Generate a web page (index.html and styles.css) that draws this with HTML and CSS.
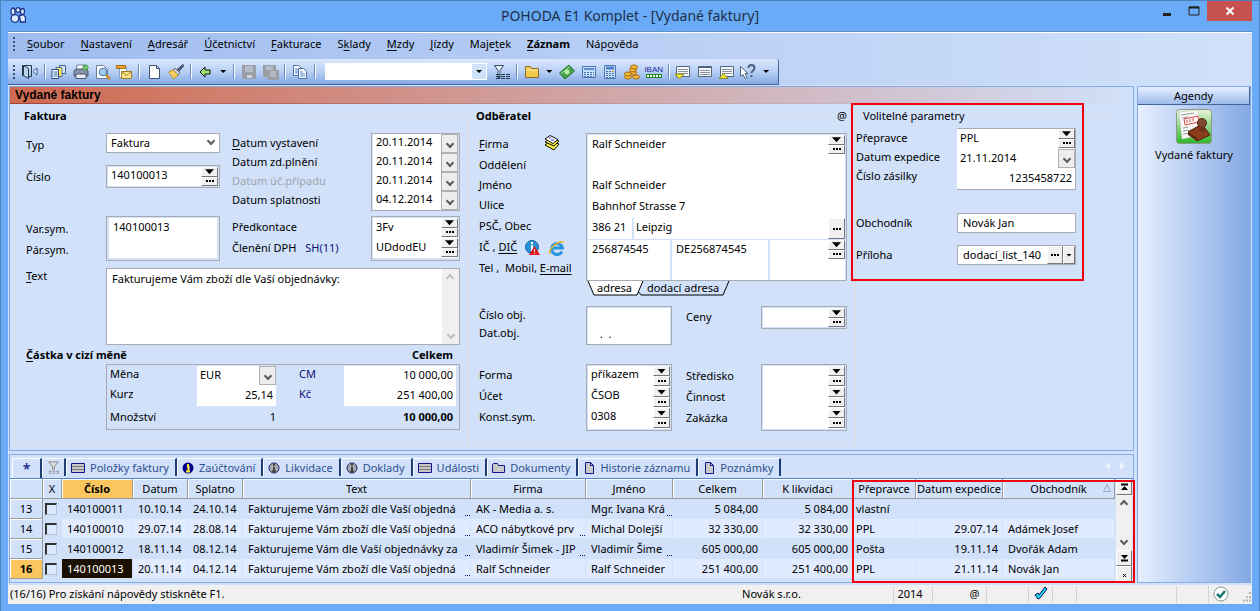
FILE: index.html
```html
<!DOCTYPE html>
<html lang="cs">
<head>
  <meta charset="UTF-8">
  <title>POHODA E1 Komplet - [Vydané faktury]</title>
  <meta name="viewport" content="width=device-width, initial-scale=1.0" />
  <link rel="stylesheet" href="styles.css">
</head>
<body>

  <header class="titlebar">
    <svg class="logo" viewBox="0 0 16 16"><g fill="#dcecff" stroke="#24348c" stroke-width="1.3"><ellipse cx="3" cy="4.500" rx="2" ry="3.500"/><ellipse cx="8" cy="3" rx="2.200" ry="2.300"/><ellipse cx="12.500" cy="4.500" rx="2" ry="3"/><circle cx="5" cy="11.500" r="3.800"/><path d="M9.500 8.500l4-1 2 3v4.500h-5z"/></g></svg>
    <h1>POHODA E1 Komplet - [Vydané faktury]</h1>
    <div class="winbuttons">
      <button aria-label="Minimalizovat"><svg width="10" height="10"><path d="M1 8.500h8" stroke="#222" stroke-width="3"/></svg></button>
      <button aria-label="Maximalizovat"><svg width="12" height="10"><path d="M1 1h10v8H1z" fill="none" stroke="#222"/><path d="M1 1.500h10" stroke="#222" stroke-width="2"/></svg></button>
      <button class="close" aria-label="Zavřít"><svg width="10" height="10"><path d="M1.500 1.500l7 7m0-7l-7 7" stroke="#fff" stroke-width="2"/></svg></button>
    </div>
  </header>

  <div class="client">
    <nav class="menu">
      <span class="grip"></span>
      <a href="#"><u>S</u>oubor</a>
      <a href="#"><u>N</u>astavení</a>
      <a href="#"><u>A</u>dresář</a>
      <a href="#"><u>Ú</u>četnictví</a>
      <a href="#"><u>F</u>akturace</a>
      <a href="#">S<u>k</u>lady</a>
      <a href="#"><u>M</u>zdy</a>
      <a href="#"><u>J</u>ízdy</a>
      <a href="#">Maje<u>t</u>ek</a>
      <a href="#"><b><u>Z</u>áznam</b></a>
      <a href="#">Náp<u>o</u>věda</a>
    </nav>

    <div class="toolbar">
      <span class="grip"></span>
      <button aria-label="Konec"><svg viewBox="0 0 16 16"><path d="M.500 12.500V1.500h9v11H6.500" fill="none" stroke="#223c4c"/><path d="M1.500 1.500l5 3v10l-5-3z" fill="#b8d4e8" stroke="#223c4c"/><path d="M15 4v7l-4-3.500z" fill="#e8f2ff" stroke="#3d5f94"/></svg></button>
      <i class="sep"></i>
      <button aria-label="Agendy"><svg viewBox="0 0 16 16"><path d="M8.500 1.500h6v8h-6z" fill="#dbe8fa" stroke="#3c5c94"/><path d="M5 3.500h6v9H5z" fill="#fde858" stroke="#53719d"/><path d="M1 5.500h6.500v9H1z" fill="#fff" stroke="#2d4f88"/><path d="M2.500 8h4m-4 2h4m-4 2h4" stroke="#2b66bd"/></svg></button>
      <button aria-label="Tisk"><svg viewBox="0 0 16 16"><path d="M4 1h8l-1 6H3z" fill="#fff" stroke="#7286a0"/><path d="M1 7l2-2h10l2 2v5H1z" fill="#8793a8" stroke="#48546a"/><path d="M3 10h10v4.500H3z" fill="#e8edf5" stroke="#4b5872"/><circle cx="12.500" cy="3.500" r="3" fill="#49a64b"/><path d="M11 3.500l1 1 2-2" stroke="#fff" fill="none"/></svg></button>
      <button aria-label="Náhled"><svg viewBox="0 0 16 16"><path d="M1.500 1.500h7l4 4v9h-11z" fill="#fff" stroke="#667f9e"/><path d="M11 11l4 4" stroke="#c98a25" stroke-width="2.500"/><circle cx="8" cy="8" r="3.800" fill="#9dcbee" stroke="#51779f"/></svg></button>
      <button aria-label="Odeslat e-mailem"><svg viewBox="0 0 16 16"><path d="M3.500 3.500h7v10h-7z" fill="#fff" stroke="#8ca0bb"/><path d="M.500 1.500h9v3h-9z" fill="#f0a32e" stroke="#a96b1b"/><path d="M5.500 7.500h10v7h-10z" fill="#fbe48a" stroke="#9d7c24"/><path d="M5.500 7.500l5 4 5-4" fill="none" stroke="#9d7c24"/></svg></button>
      <i class="sep"></i>
      <button aria-label="Nový"><svg viewBox="0 0 16 16"><path d="M3.500 1.500h7l3 3v10h-10z" fill="#fff" stroke="#3d5576"/><path d="M10.500 1.500v3h3" fill="none" stroke="#3d5576"/></svg></button>
      <button aria-label="Vyčistit"><svg viewBox="0 0 16 16"><path d="M15 .500l.500 1.500-5 6-2-2z" fill="#54658a" stroke="#39476b"/><path d="M7 4l5 5-2 2-5-5z" fill="#c8ccd8" stroke="#777"/><path d="M5 6l5 5-4 4-5.500-7z" fill="#f4cf60" stroke="#b98e31"/></svg></button>
      <i class="sep"></i>
      <button aria-label="Zpět"><svg viewBox="0 0 16 16"><path d="M3 8l5-5v3h5v4H8v3z" fill="#9be86e" stroke="#111"/></svg></button>
      <button class="caret" aria-label="Historie"></button>
      <i class="sep"></i>
      <button disabled aria-label="Uložit"><svg viewBox="0 0 16 16"><path d="M1 1h14v14H1z" fill="#9b9ea4"/><path d="M4 2h8v6H4z" fill="#b4bcc8"/><path d="M6 11h5v3H6z" fill="#c8d2e0"/></svg></button>
      <button disabled aria-label="Uložit kopii"><svg viewBox="0 0 16 16"><path d="M0 1h13v5h3v10H5v-3H0z" fill="#9b9ea4"/><path d="M3 2h7v4H3z" fill="#b4bcc8"/><path d="M7 8h6m-6 2h6m-6 2h6" stroke="#c8d2e0"/></svg></button>
      <i class="sep"></i>
      <button aria-label="Kopírovat"><svg viewBox="0 0 16 16"><path d="M1.500 1.500h5l3 3v7h-8z" fill="#fff" stroke="#4a70aa"/><path d="M6.500 4.500h5l3 3v7h-8z" fill="#fff" stroke="#4a70aa"/><path d="M3 5h3m-3 2h3m-3 2h3m2-1h3m-3 2h5m-5 2h5" stroke="#4a82cc"/></svg></button>
      <i class="sep"></i>
      <span class="search"><input type="text" aria-label="Hledat"><button class="caret" aria-label="Seznam"></button></span>
      <button aria-label="Filtr"><svg viewBox="0 0 16 16"><path d="M.500 1.500h9l-3.500 5v7H4v-7z" fill="#e8f2ff" stroke="#354e65"/><path d="M2 10.500h14m-14 2h14m-14 2h14" stroke="#24394b" stroke-dasharray="4 1"/></svg></button>
      <i class="sep"></i>
      <button aria-label="Složka"><svg viewBox="0 0 16 16"><path d="M1.500 2.500h5l1 2h7v9h-13z" fill="#f2cb4e" stroke="#8a7027"/><path d="M2 6h12" stroke="#fff0aa"/></svg></button>
      <button class="caret" aria-label="Složky"></button>
      <button aria-label="Platba"><svg viewBox="0 0 16 16"><path d="M.500 9L10 1l5.500 6L6 15z" fill="#43a34d" stroke="#23722e"/><path d="M2 9.500L11 2.500" stroke="#b0e89a"/><circle cx="8" cy="8" r="2.500" fill="#b9e9a9"/></svg></button>
      <button aria-label="Kalkulačka"><svg viewBox="0 0 16 16"><path d="M1.500 2.500h13v11h-13z" fill="#c6ddfa" stroke="#4c78b3"/><path d="M3 5h10" stroke="#608fc9" stroke-width="2"/><path d="M3 8.500h10m-10 2h10m-10 2h10" stroke="#4773ac" stroke-dasharray="2 1"/></svg></button>
      <button aria-label="Kalkulátor"><svg viewBox="0 0 16 16"><path d="M2.500 1.500h11v13h-11z" fill="#c6ddfa" stroke="#4c78b3"/><path d="M4 4h8" stroke="#4d82c9" stroke-width="3"/><path d="M4 7.500h8m-8 2h8m-8 2h8m-8 2h8" stroke="#4773ac" stroke-dasharray="2 1"/><path d="M10 7.500h2" stroke="#f08a20"/></svg></button>
      <button aria-label="Mince"><svg viewBox="0 0 16 16"><g fill="#f4b838" stroke="#a56b10"><ellipse cx="9" cy="9" rx="3.500" ry="2"/><ellipse cx="9" cy="6" rx="3.500" ry="2"/><ellipse cx="10" cy="3" rx="3.500" ry="2"/><ellipse cx="4" cy="13" rx="3.500" ry="2"/><ellipse cx="4" cy="10" rx="3.500" ry="2"/><ellipse cx="12" cy="13" rx="3.500" ry="2"/></g></svg></button>
      <button class="iban" aria-label="IBAN"><b>IBAN</b><span></span></button>
      <i class="sep"></i>
      <button aria-label="Okno dole"><svg viewBox="0 0 16 16"><path d="M1.500 2.500h13v10h-13z" fill="#f4f7fb" stroke="#53657a"/><path d="M3 5.500h10m-10 2h10m-10 2h10" stroke="#8a949f"/><path d="M0 10h9l-4.500 5z" fill="#f3ea34" stroke="#8a8522"/></svg></button>
      <button aria-label="Okno"><svg viewBox="0 0 16 16"><path d="M1.500 2.500h13v10h-13z" fill="#f4f7fb" stroke="#53657a"/><path d="M1 3.500h14" stroke="#53657a"/><path d="M3 6.500h10m-10 2h10m-10 2h10" stroke="#8a949f"/></svg></button>
      <button aria-label="Okno nahoře"><svg viewBox="0 0 16 16"><path d="M1.500 2.500h13v10h-13z" fill="#f4f7fb" stroke="#53657a"/><path d="M3 5.500h10m-10 2h10m-10 2h10" stroke="#8a949f"/><path d="M0 14.500h9l-4.500-5z" fill="#f3ea34" stroke="#8a8522"/></svg></button>
      <button aria-label="Nápověda"><svg viewBox="0 0 16 16"><path d="M.500 2.500v10l2.500-2 2 4 2-1-2-4h3z" fill="#fff" stroke="#53657a"/><path d="M8.500 4c0-4 6-4 6 0 0 3-3 2.500-3 5m0 2v2" fill="none" stroke="#46617e" stroke-width="2"/></svg></button>
      <button class="caret" aria-label="Možnosti"></button>
    </div>

    <div class="work">
      <main>
        <section class="agenda">
          <h2>Vydané faktury</h2>
          <form class="form">

            <fieldset class="invoice">
              <legend>Faktura</legend>
              <div class="labels type">
                <label for="typ">Typ</label>
                <label for="cislo">Číslo</label>
              </div>
              <div class="stack">
                <span class="select"><select id="typ"><option>Faktura</option></select></span>
                <div class="box"><div class="line"><input id="cislo" value="140100013"><span class="pick"><button type="button" class="drop" aria-label="Vybrat"></button><button type="button" class="more" aria-label="Další"></button></span></div></div>
              </div>
              <div class="labels dates">
                <label for="d1"><u>D</u>atum vystavení</label>
                <label for="d2">Datum zd.plnění</label>
                <label for="d3" class="off">Datum úč.případu</label>
                <label for="d4">Datum splatnosti</label>
              </div>
              <div class="box dates">
                <div class="line"><input id="d1" value="20.11.2014"><button type="button" class="chev" aria-label="Kalendář"></button></div>
                <div class="line"><input id="d2" value="20.11.2014"><button type="button" class="chev" aria-label="Kalendář"></button></div>
                <div class="line"><input id="d3" value="20.11.2014"><button type="button" class="chev" aria-label="Kalendář"></button></div>
                <div class="line"><input id="d4" value="04.12.2014"><button type="button" class="chev" aria-label="Kalendář"></button></div>
              </div>

              <div class="labels symbols">
                <label for="vs">Var.sym.</label>
                <label for="ps">Pár.sym.</label>
              </div>
              <div class="box wide"><div class="line"><input id="vs" value="140100013"></div><div class="line"><input id="ps"></div></div>
              <div class="labels account">
                <label for="pk">Předkontace</label>
                <label for="dph">Členění DPH <span class="code">SH(11)</span></label>
              </div>
              <div class="box">
                <div class="line"><input id="pk" value="3Fv"><span class="pick"><button type="button" class="drop" aria-label="Vybrat"></button><button type="button" class="more" aria-label="Další"></button></span></div>
                <div class="line"><input id="dph" value="UDdodEU"><span class="pick"><button type="button" class="drop" aria-label="Vybrat"></button><button type="button" class="more" aria-label="Další"></button></span></div>
              </div>

              <div class="labels"><label for="text"><u>T</u>ext</label></div>
              <div class="area">
                <textarea id="text">Fakturujeme Vám zboží dle Vaší objednávky:</textarea>
                <span class="bar"><i class="up"></i><i class="down"></i></span>
              </div>

              <div class="total"><b><u>Č</u>ástka v cizí měně</b><b>Celkem</b></div>

              <div class="sums">
                <label for="mena">Měna</label>
                <div class="line"><input id="mena" value="EUR"><button type="button" class="chev" aria-label="Měny"></button></div>
                <label for="cm" class="blue">CM</label>
                <input id="cm" class="num" value="10 000,00">
                <label for="kurz">Kurz</label>
                <input id="kurz" class="num" value="25,14">
                <label for="kc" class="blue">Kč</label>
                <input id="kc" class="num" value="251 400,00">
                <span class="out first">Množství</span>
                <span class="out">1</span>
                <b class="out last">10 000,00</b>
              </div>
            </fieldset>

            <fieldset class="buyer">
              <legend>Odběratel</legend>
              <span class="at">@</span>
              <div class="labels person">
                <label for="firma" class="spread"><span><u>F</u>irma</span><svg width="16" height="16" viewBox="0 0 16 16"><path d="M1 10l5-4 9 3-5 6z" fill="#f7ee3b" stroke="#111"/><path d="M1 7l5-4 9 3-5 5z" fill="#f7ee3b" stroke="#111"/><path d="M1 4l5-3.500 8 4-5 4z" fill="#fff" stroke="#111"/><path d="M5 3h2m0 2h3" stroke="#22c"/></svg></label>
                <label for="odd">Oddělení</label>
                <label for="jmeno">Jméno</label>
                <label for="ulice">Ulice</label>
                <label for="psc">PSČ, Obec</label>
                <div class="ids"><label for="ic">IČ ,</label> <a href="#">DIČ</a>
                  <svg width="16" height="16" viewBox="0 0 16 16"><circle cx="7" cy="7" r="6.500" fill="#2492d4" stroke="#1564a0"/><path d="M7 2v2m0 1v6" stroke="#fff" stroke-width="2"/><path d="M9.500 6l5.500 9H4z" fill="#e3141b"/><path d="M9.500 9v3m0 1v1" stroke="#fff"/></svg>
                  <svg width="16" height="16" viewBox="0 0 16 16"><path d="M13 11.500A5.500 5.500 0 1 1 13.500 8H4" fill="none" stroke="#2b96e0" stroke-width="3"/><path d="M1 14C-1 9 9 0 15 2" fill="none" stroke="#e8b635" stroke-width="1.500"/></svg>
                </div>
                <div><label for="tel">Tel ,</label>&nbsp; Mobil, <a href="#">E-mail</a></div>
              </div>
              <div class="person-box">
                <div class="cell"><input id="firma" value="Ralf Schneider"><span class="pick"><button type="button" class="drop" aria-label="Vybrat"></button><button type="button" class="more" aria-label="Další"></button></span></div>
                <div class="cell"><input id="odd"></div>
                <div class="cell"><input id="jmeno" value="Ralf Schneider"></div>
                <div class="cell"><input id="ulice" value="Bahnhof Strasse 7"></div>
                <div class="cell city"><input id="psc" value="386 21"><input aria-label="Obec" value="Leipzig"><button type="button" class="more tall" aria-label="Obce"></button></div>
                <div class="cell tax">
                  <div><input id="ic" value="256874545"><input id="tel"></div>
                  <div><input aria-label="DIČ" value="DE256874545"><input aria-label="Mobil"></div>
                  <div><input aria-label="E-mail"></div>
                  <span class="pick"><button type="button" class="drop" aria-label="Vybrat"></button><button type="button" class="more" aria-label="Další"></button></span>
                </div>
              </div>
              <div class="sheets"><svg width="145" height="16" viewBox="0 0 145 16"><path d="M1 0l6 14h43l6-14z" fill="#fff"/><path d="M1 0l6 14h43l6-14M51 10l3 4h82l6-14" fill="none" stroke="#000"/></svg><a href="#">adresa</a><a href="#">dodací adresa</a></div>

              <div class="labels order">
                <label for="obj">Číslo obj.</label>
                <label for="dobj">Dat.obj.</label>
              </div>
              <div class="box order"><div class="line"><input id="obj"></div><div class="line"><input id="dobj" value="  .  ."></div></div>
              <div class="labels prices"><label for="ceny">Ceny</label></div>
              <div class="box"><div class="line"><input id="ceny"><span class="pick"><button type="button" class="drop" aria-label="Vybrat"></button><button type="button" class="more" aria-label="Další"></button></span></div></div>

              <div class="labels pay">
                <label for="forma">Forma</label>
                <label for="ucet">Účet</label>
                <label for="ks">Konst.sym.</label>
              </div>
              <div class="box pay">
                <div class="line"><input id="forma" value="příkazem"><span class="pick"><button type="button" class="drop" aria-label="Vybrat"></button><button type="button" class="more" aria-label="Další"></button></span></div>
                <div class="line"><input id="ucet" value="ČSOB"><span class="pick"><button type="button" class="drop" aria-label="Vybrat"></button><button type="button" class="more" aria-label="Další"></button></span></div>
                <div class="line"><input id="ks" value="0308"><span class="pick"><button type="button" class="drop" aria-label="Vybrat"></button><button type="button" class="more" aria-label="Další"></button></span></div>
              </div>
              <div class="labels pay centre">
                <label for="str">Středisko</label>
                <label for="cin">Činnost</label>
                <label for="zak">Zakázka</label>
              </div>
              <div class="box pay">
                <div class="line"><input id="str"><span class="pick"><button type="button" class="drop" aria-label="Vybrat"></button><button type="button" class="more" aria-label="Další"></button></span></div>
                <div class="line"><input id="cin"><span class="pick"><button type="button" class="drop" aria-label="Vybrat"></button><button type="button" class="more" aria-label="Další"></button></span></div>
                <div class="line"><input id="zak"><span class="pick"><button type="button" class="drop" aria-label="Vybrat"></button><button type="button" class="more" aria-label="Další"></button></span></div>
              </div>
            </fieldset>

            <fieldset class="extra">
              <legend>Volitelné parametry</legend>
              <div class="labels ship">
                <label for="prep">Přepravce</label>
                <label for="exp">Datum expedice</label>
                <label for="zas">Číslo zásilky</label>
              </div>
              <div class="ship-box">
                <div class="line"><input id="prep" value="PPL"><span class="pick"><button type="button" class="drop" aria-label="Vybrat"></button><button type="button" class="more" aria-label="Další"></button></span></div>
                <div class="line"><input id="exp" value="21.11.2014"><button type="button" class="chev" aria-label="Kalendář"></button></div>
                <div class="line"><input id="zas" class="num" value="1235458722"></div>
              </div>
              <label for="obch">Obchodník</label>
              <div class="single"><input id="obch" value="Novák Jan"></div>
              <label for="pril">Příloha</label>
              <div class="single"><input id="pril" value="dodací_list_140"><button type="button" class="more flat" aria-label="Procházet"></button><button type="button" class="caret flat" aria-label="Přílohy"></button></div>
            </fieldset>
          </form>
        </section>

        <section class="list">
          <nav class="tabs">
            <a href="#" class="on">*</a>
            <a href="#" class="filter" aria-label="Filtr"><svg width="15" height="14" viewBox="0 0 16 14"><path d="M3 .500h10l-4 5v3H7v-3z" fill="#ddd" stroke="#888"/><path d="M3 10.500h11m-11 2h11" stroke="#888" stroke-dasharray="3 1"/></svg></a>
            <a href="#"><svg width="14" height="12"><path d="M.500 1.500h13v9H.500z" fill="#c8c8c8" stroke="#14148a"/><path d="M1 4.500h12m-12 3h12" stroke="#777"/></svg>Položky faktury</a>
            <a href="#"><svg width="12" height="12"><circle cx="6" cy="6" r="5.500" fill="#00008b"/><path d="M6 2v2m-1 1h1.500v4M4 9.500h4" stroke="#ffef3c" stroke-width="2" fill="none"/></svg>Zaúčtování</a>
            <a href="#"><svg width="12" height="12"><circle cx="6" cy="6" r="5" fill="#aaa" stroke="#20206c"/><path d="M6 2v2m0 1v4M4 9.500h4" stroke="#444" stroke-width="2"/></svg>Likvidace</a>
            <a href="#"><svg width="12" height="12"><circle cx="6" cy="6" r="5" fill="#aaa" stroke="#20206c"/><path d="M6 2v2m0 1v4M4 9.500h4" stroke="#444" stroke-width="2"/></svg>Doklady</a>
            <a href="#"><svg width="14" height="12"><path d="M.500 1.500h13v9H.500z" fill="#c8c8c8" stroke="#14148a"/><path d="M1 4.500h12m-12 3h12" stroke="#777"/></svg>Události</a>
            <a href="#"><svg width="13" height="12"><path d="M.500 10.500v-8l1-1h4l1 2h6v7z" fill="#c8c8c8" stroke="#14148a"/></svg>Dokumenty</a>
            <a href="#"><svg width="12" height="12"><path d="M2.500.500h5l3 3v8h-8z" fill="#c8c8c8" stroke="#14148a"/><path d="M7.500.500v3h3" fill="none" stroke="#14148a"/></svg>Historie záznamu</a>
            <a href="#"><svg width="12" height="12"><path d="M2.500.500h5l3 3v8h-8z" fill="#c8c8c8" stroke="#14148a"/><path d="M7.500.500v3h3" fill="none" stroke="#14148a"/></svg>Poznámky</a>
            <span class="arrows"><i></i><i></i></span>
          </nav>
          <div class="grid">
            <table>
              <colgroup>
                <col class="c-no"><col class="c-x"><col class="c-id"><col class="c-date"><col class="c-date"><col><col class="c-firm"><col class="c-name"><col class="c-sum"><col class="c-sum"><col class="c-ship"><col class="c-exp"><col class="c-sale">
              </colgroup>
              <thead>
                <tr><th></th><th>X</th><th class="sorted">Číslo</th><th>Datum</th><th>Splatno</th><th>Text</th><th>Firma</th><th>Jméno</th><th>Celkem</th><th>K likvidaci</th><th>Přepravce</th><th>Datum expedice</th><th class="asc">Obchodník<svg width="8" height="8"><path d="M.500 7.500h7L4 .500z" fill="none" stroke="#9aa8c4"/></svg></th></tr>
              </thead>
              <tbody>
                <tr><th>13</th><td class="tick"><input type="checkbox" aria-label="Označit 13"></td><td>140100011</td><td>10.10.14</td><td>24.10.14</td><td class="cut">Fakturujeme Vám zboží dle Vaší objedná</td><td>AK - Media a. s.</td><td class="cut">Mgr. Ivana Krá</td><td class="num">5 084,00</td><td class="num">5 084,00</td><td class="near">vlastní</td><td class="num"></td><td></td></tr>
                <tr><th>14</th><td class="tick"><input type="checkbox" aria-label="Označit 14"></td><td>140100010</td><td>29.07.14</td><td>28.08.14</td><td class="cut">Fakturujeme Vám zboží dle Vaší objedná</td><td class="cut">ACO nábytkové prv</td><td>Michal Dolejší</td><td class="num">32 330,00</td><td class="num">32 330,00</td><td class="near">PPL</td><td class="num">29.07.14</td><td>Adámek Josef</td></tr>
                <tr><th>15</th><td class="tick"><input type="checkbox" aria-label="Označit 15"></td><td>140100012</td><td>18.11.14</td><td>08.12.14</td><td class="cut">Fakturujeme Vám dle Vaší objednávky za</td><td class="cut">Vladimír Šimek - JIP</td><td class="cut">Vladimír Šime</td><td class="num">605 000,00</td><td class="num">605 000,00</td><td class="near">Pošta</td><td class="num">19.11.14</td><td>Dvořák Adam</td></tr>
                <tr class="current"><th>16</th><td class="tick"><input type="checkbox" aria-label="Označit 16"></td><td class="picked">140100013</td><td>20.11.14</td><td>04.12.14</td><td class="cut">Fakturujeme Vám zboží dle Vaší objedná</td><td>Ralf Schneider</td><td>Ralf Schneider</td><td class="num">251 400,00</td><td class="num">251 400,00</td><td class="near">PPL</td><td class="num">21.11.14</td><td>Novák Jan</td></tr>
              </tbody>
            </table>
            <div class="scroll">
              <button aria-label="Na začátek"><svg width="9" height="8"><path d="M1 1.500h7" stroke="#000" stroke-width="2"/><path d="M1 7h7L4.500 3z"/></svg></button>
              <span class="bar"><i class="up"></i><i class="down"></i></span>
              <button aria-label="Na konec"><svg width="9" height="8"><path d="M1 6.500h7" stroke="#000" stroke-width="2"/><path d="M1 1h7L4.500 5z"/></svg></button>
              <button aria-label="Zrušit"><svg width="5" height="5"><path d="M1 1l3 3m0-3l-3 3" stroke="#000"/></svg></button>
            </div>
          </div>
        </section>
      </main>

      <aside>
        <h2>Agendy</h2>
        <a href="#">
          <svg width="36" height="36" viewBox="0 0 36 36"><defs><linearGradient id="gr" x1="0" y1="0" x2="0" y2="1"><stop offset="0" stop-color="#e8f6dc"/><stop offset="1" stop-color="#2fb52a"/></linearGradient></defs><rect x=".500" y=".500" width="35" height="34" rx="3" fill="url(#gr)" stroke="#8d9a8a"/><path d="M3 3l19-2 4 25-20 4z" fill="#f8f8f6" stroke="#bbb" stroke-width=".500"/><path d="M5 6l13-2m-12 5l6-1m-5 11l5-1m-5 4l8-1m-8 4l8-1" stroke="#999"/><path d="M8 10l14-3 1 6-14 3z" fill="none" stroke="#e04848"/><path d="M11 14v-3m3 2v-3m3 2v-3" stroke="#e04848"/><path d="M12 23l14-8 8 11-13 6z" fill="#8c3d1c" stroke="#50200e"/><path d="M12 23l9 6v3l-9-6z" fill="#5e260f"/><circle cx="26" cy="14" r="4.500" fill="#7d4a30" stroke="#4b2818"/><path d="M24 18l5 0-1 5-5-1z" fill="#6b3018"/></svg>
          Vydané faktury
        </a>
      </aside>
    </div>

    <footer>
      <span class="hint">(16/16) Pro získání nápovědy stiskněte F1.</span>
      <span class="company">Novák s.r.o.</span>
      <span class="s-year">2014</span>
      <span class="s-at">@</span>
      <span class="s-gap"></span>
      <span class="s-small"><svg width="14" height="14" viewBox="0 0 14 14"><path d="M1 9l3-2 1 2 6-8 2 2-7 9-2 1z" fill="#20d8f0" stroke="#101060"/></svg></span>
      <span class="s-small"></span>
      <span class="s-long"></span>
      <span class="s-ok"></span>
      <span class="s-small"><svg width="16" height="16" viewBox="0 0 16 16"><circle cx="8" cy="8" r="7" fill="#fff" stroke="#8b999c"/><path d="M4 8l3 3 5-6" fill="none" stroke="#15756d" stroke-width="2.500"/></svg></span>
      <svg class="size" width="10" height="10"><path d="M7 1h2m-5 4h2m1 0h2M1 8.500h2m1 0h2m1 0h2" stroke="#b4b4b4" stroke-width="2"/></svg>
    </footer>
  </div>

</body>
</html>
```

FILE: styles.css
```css
*, *::before, *::after {
  box-sizing: border-box;
}
body {
  display: flex;
  flex-direction: column;
  min-height: 100vh;
  margin: 0;
  padding: 0 7px 7px;
  border: 1px solid #4d82bd;
  background: #6aabf7;
  color: #000;
  font-family: "Noto Sans", "Segoe UI", sans-serif;
  font-size: 11px;
  line-height: 16px;
}
h1, h2 {
  margin: 0;
  font-weight: normal;
}
a {
  color: inherit;
  text-decoration: none;
}
u {
  text-underline-offset: 2px;
}
button {
  margin: 0;
  padding: 0;
  border: none;
  background: none;
  color: inherit;
  font: inherit;
}
input, select, textarea {
  min-width: 0;
  margin: 0;
  padding: 0;
  border: none;
  outline: none;
  background: #fff;
  color: inherit;
  font: inherit;
  resize: none;
}

/* window frame */
.titlebar {
  display: flex;
  justify-content: space-between;
  align-items: flex-start;
  height: 30px;
}
.logo {
  width: 16px;
  height: 16px;
  margin: 6px 2px;
}
.titlebar h1 {
  flex: 1;
  padding-left: 79px;
  font-size: 14px;
  line-height: 30px;
  text-align: center;
  color: #1d2f4a;
}
.winbuttons {
  display: flex;
}
.winbuttons button {
  width: 27px;
  height: 20px;
}
.winbuttons svg {
  display: block;
  margin: 5px auto;
}
.winbuttons .close {
  width: 45px;
  background: #c75050;
}
.client {
  display: flex;
  flex: 1;
  flex-direction: column;
  border-top: 1px solid #5d8fc9;
  background: linear-gradient(90deg, #9fbcef, #d1e1fa);
  box-shadow: inset 0 1px #fff;
}

/* menu and toolbar */
.menu {
  display: flex;
  gap: 16px;
  align-items: center;
  height: 27px;
  padding: 0 5px 4px;
}
.grip {
  width: 2px;
  height: 14px;
  background: repeating-linear-gradient(#33527e 0 2px, transparent 2px 4px);
}
.menu .grip {
  margin-right: -4px;
}
.toolbar {
  display: flex;
  align-self: flex-start;
  align-items: center;
  width: 771px;
  height: 26px;
  padding: 0 5px;
  border-right: 1px solid #44649c;
  border-bottom: 1px solid #44649c;
  border-radius: 0 3px 0 0;
  background: linear-gradient(#dbe8fd, #b8d0f5 50%, #84a9e3);
}
.toolbar > button {
  width: 22px;
  height: 22px;
}
.toolbar > .grip + button {
  margin-left: 4px;
}
.toolbar > button svg {
  display: block;
  width: 16px;
  height: 16px;
  margin: 0 auto;
}
.sep {
  width: 1px;
  height: 15px;
  margin: 0 4px 0 3px;
  background: #6a8ccb;
  box-shadow: 1px 0 #fff;
}
.toolbar button.caret {
  width: 14px;
}
.caret::after {
  content: "";
  display: block;
  width: 6px;
  height: 3px;
  margin: 0 auto;
  background: #000;
  clip-path: polygon(0 0, 100% 0, 50% 100%);
}
.search {
  display: flex;
  width: 162px;
  height: 17px;
  margin: 0 4px 0 6px;
  background: #fff;
}
.search input {
  flex: 1;
}
.search button {
  height: 15px;
  margin: 1px;
  background: #cfe0f9;
}
.iban b {
  display: block;
  margin: 0 -2px;
  color: #1c2aa0;
  font-family: "Liberation Sans", Arial, sans-serif;
  font-size: 8px;
  font-weight: normal;
  line-height: 9px;
}
.iban span {
  display: block;
  width: 16px;
  height: 4px;
  margin: 0 auto;
  border: 1px solid #1b8a1b;
  background: repeating-linear-gradient(90deg, #fff 0 2px, #1b8a1b 2px 3px);
}

/* working area */
.work {
  display: flex;
  flex: 1;
  gap: 3px;
  padding: 1px 1px 2px;
  background: #d1e1fa;
}
main {
  display: flex;
  flex: 1;
  flex-direction: column;
  gap: 3px;
  min-width: 0;
}
.agenda {
  flex: 1;
  border: 1px solid #83abe6;
}
.agenda h2 {
  padding-left: 5px;
  border-bottom: 1px solid #a0524a;
  border-image: linear-gradient(90deg, #a0443a, #d1e1fa) 1;
  background: linear-gradient(90deg, #d0694f, #d1bfcb 75%, #d1e1fa);
  font-family: "Liberation Sans", Arial, sans-serif;
  font-size: 12px;
  font-weight: bold;
  line-height: 16px;
}
.form {
  display: grid;
  grid-template-columns: 453px 387px minmax(230px, 1fr);
  padding: 4px 20px 4px 5px;
}
fieldset {
  display: grid;
  position: relative;
  align-content: start;
  min-width: 0;
  margin: 7px 0 0;
  padding: 17px 11px 14px;
  border: 1px solid #d9dde6;
}
legend {
  position: absolute;
  top: -8px;
  left: 6px;
  padding: 0 2px;
  background: #d1e1fa;
  font-weight: bold;
}
.labels {
  display: flex;
  flex-direction: column;
}
.off {
  color: #a0a4ac;
}
.code, .blue {
  color: #10107c;
}
.code {
  margin-left: 6px;
}
.labels a {
  text-decoration: underline;
  text-underline-offset: 2px;
}

/* boxes with one or more input lines */
.box {
  align-self: start;
  width: 100%;
  padding: 1px;
  border: 1px solid #a8abb2;
}
.line {
  display: flex;
  height: 19px;
  background: #fff;
}
.line input {
  flex: 1;
  width: 0;
  padding: 0 3px 3px;
}
.num {
  text-align: right;
}
.chev, .pick {
  flex: none;
  width: 17px;
  height: 19px;
}
.chev {
  border: 1px solid #b0b0b0;
  background: #ededed;
}
.chev::after, .select::after, .bar i::after {
  content: "";
  display: block;
  width: 6px;
  height: 6px;
  margin: 0 auto;
  border: solid #5c5c5c;
  border-width: 0 2px 2px 0;
  transform: rotate(45deg);
}
.pick {
  display: flex;
  flex-direction: column;
}
.pick button {
  flex: 1;
}
.drop, .more, .flat, .scroll button {
  border: 1px solid;
  border-color: #fff #777 #777 #fff;
  background: #f0f0f0;
}
.drop::after {
  content: "";
  display: block;
  width: 9px;
  height: 5px;
  margin: 0 auto;
  background: #000;
  clip-path: polygon(0 0, 100% 0, 50% 100%);
}
.more::after {
  content: "";
  display: block;
  width: 8px;
  height: 2px;
  margin: 0 auto;
  background: repeating-linear-gradient(90deg, #000 0 2px, transparent 2px 3px);
}

/* invoice */
.invoice, .buyer {
  padding-left: 10px;
}
.invoice {
  grid-template-columns: 80px 114px 151px 89px;
}
.labels.type {
  gap: 16px;
  padding-top: 4px;
}
.stack {
  display: flex;
  flex-direction: column;
  gap: 12px;
}
.select {
  display: block;
  position: relative;
  height: 20px;
  border: 1px solid #a8abb2;
}
.select select {
  width: 100%;
  height: 18px;
  padding-left: 4px;
  appearance: none;
}
.select::after {
  position: absolute;
  top: 4px;
  right: 5px;
}
.labels.dates, .labels.account {
  padding-left: 12px;
}
.labels.dates label {
  line-height: 19px;
}
.box.dates {
  margin-bottom: 5px;
  padding: 0 1px;
}
.labels.symbols {
  padding-top: 2px;
}
.labels.symbols label, .labels.account label {
  line-height: 21px;
}
.box.wide {
  padding: 1px 2px;
}
.invoice > .box.wide, .labels.account + .box {
  height: 45px;
}
.box.wide .line {
  height: 20px;
  padding-left: 1px;
}
.labels.account + .box .line {
  height: 20px;
}
.labels.account ~ .labels, .area {
  margin-top: 7px;
}
.area {
  display: flex;
  grid-column: 2 / -1;
  height: 77px;
  border: 1px solid #a8abb2;
  background: #fff;
}
.area textarea {
  flex: 1;
  padding: 2px 5px;
}
.bar {
  display: flex;
  flex-direction: column;
  justify-content: space-between;
  width: 17px;
  padding: 6px 0;
  background: #f0f0f0;
}
.area .bar i::after {
  border-color: #bfbfbf;
}
.bar .up {
  transform: rotate(180deg);
}
.total {
  display: flex;
  grid-column: 1 / -1;
  justify-content: space-between;
  padding: 2px 7px 1px 0;
}
.sums {
  display: grid;
  grid-column: 2 / -1;
  grid-template-columns: 87px 79px 24px 44px 112px;
  grid-auto-rows: 20px;
  align-items: center;
  height: 66px;
  padding: 1px 3px;
  border: 1px solid #a8abb2;
}
.sums label {
  padding-bottom: 4px;
}
.sums input {
  height: 20px;
  padding: 0 3px 3px;
}
.sums .line {
  height: 20px;
}
.sums .blue {
  grid-column: 3 / 5;
  margin-left: 23px;
}
.sums .out {
  padding-top: 2px;
  text-align: right;
}
.sums .first {
  text-align: left;
}
.sums .last {
  grid-column: 5;
  padding-right: 3px;
}

/* buyer */
.buyer {
  grid-template-columns: 107px 86px 89px 86px;
}
.buyer legend {
  left: 5px;
}
.at {
  position: absolute;
  top: -8px;
  right: 5px;
  padding: 0 2px;
  background: #d1e1fa;
}
.labels.person > * {
  height: 21px;
  line-height: 21px;
}
.labels.person > :nth-child(2), .labels.person > :nth-child(3) {
  height: 20px;
}
.spread {
  display: flex;
  justify-content: space-between;
  padding-right: 26px;
}
.spread svg {
  margin-top: 2px;
}
.ids svg {
  margin-left: 5px;
  vertical-align: middle;
}
.person-box {
  grid-column: 2 / -1;
  height: 148px;
  padding: 1px;
  border: 1px solid #a8abb2;
}
.cell {
  display: flex;
  height: 21px;
  background: #fff;
}
.cell:nth-child(2) {
  height: 20px;
}
.cell input {
  flex: 1;
  padding: 0 4px 4px;
}
.cell .tall {
  width: 17px;
}
.city input:first-child {
  flex: 0 0 44px;
}
.city input + input {
  padding: 0 2px 3px;
  border-left: 2px solid #d1e1fa;
}
.cell.tax {
  height: 40px;
  margin-top: 1px;
}
.tax div {
  display: flex;
  flex: 0 0 84px;
  flex-direction: column;
  border-right: 2px solid #d1e1fa;
}
.tax div:nth-child(2) {
  flex-basis: 98px;
}
.tax div:nth-child(3) {
  flex: 1;
  border: none;
}
.tax input {
  flex: none;
  width: 100%;
  height: 20px;
}
.sheets {
  display: flex;
  position: relative;
  grid-column: 2 / -1;
  gap: 15px;
  height: 25px;
  padding-left: 11px;
  line-height: 14px;
}
.sheets svg {
  position: absolute;
  top: 0;
  left: 1px;
}
.sheets a {
  position: relative;
}
.labels.order {
  line-height: 18px;
}
.box.order {
  height: 39px;
  margin-bottom: 19px;
}
.box.order .line {
  height: 18px;
}
#dobj {
  padding-left: 6px;
  white-space: pre;
}
.buyer .prices, .centre {
  padding-left: 14px;
}
.labels.prices {
  padding-top: 3px;
}
.labels.pay label {
  line-height: 21px;
}
.labels.centre {
  padding-top: 1px;
}
.box.pay .line {
  height: 21px;
}
.box.pay input {
  padding-bottom: 5px;
}
.box.pay .pick {
  height: 20px;
}

/* optional parameters */
.extra {
  grid-template-columns: 101px 119px;
  justify-content: start;
  padding: 12px 0;
  border-width: 1px 0 0 1px;
}
.extra::before {
  content: "";
  position: absolute;
  top: -13px;
  left: -5px;
  width: 233px;
  height: 178px;
  border: 2px solid #f00010;
}
.extra legend {
  left: 5px;
  font-weight: normal;
}
.extra label {
  line-height: 19px;
}
.ship-box {
  margin-bottom: 23px;
  border: solid #a8abb2;
  border-width: 1px 1px 1px 0;
}
.ship-box .line {
  height: 20px;
}
.ship-box input {
  padding-bottom: 2px;
}
.single {
  display: flex;
  height: 20px;
  margin-bottom: 12px;
  border: 1px solid #a8abb2;
  background: #fff;
}
.single input {
  flex: 1;
  padding-left: 5px;
}
.more.flat {
  width: 16px;
}
.caret.flat {
  width: 12px;
}

/* tabs */
.list {
  display: flex;
  position: relative;
  flex-direction: column;
  border: 1px solid #83abe6;
}
.tabs {
  display: flex;
  height: 24px;
  padding: 3px 0 0 2px;
  border-bottom: 1px solid #4f86cf;
}
.tabs a {
  display: flex;
  gap: 5px;
  align-items: center;
  height: 18px;
  padding: 0 6px 0 4px;
  border-top: 1px solid #fff;
  border-left: 1px solid #fff;
  border-right: 2px solid #1d3f78;
  border-radius: 2px 0 0 0;
  color: #2f4f8e;
}
.tabs .filter {
  padding: 0 3px;
}
.tabs .on {
  justify-content: center;
  width: 30px;
  height: 20px;
  padding: 0;
  color: #00007c;
  font-size: 14px;
}
.arrows {
  display: flex;
  gap: 10px;
  margin: 4px 8px 0 auto;
}
.arrows i {
  width: 5px;
  height: 8px;
  background: #edf3fd;
  clip-path: polygon(100% 0, 100% 100%, 0 50%);
}
.arrows i + i {
  clip-path: polygon(0 0, 100% 50%, 0 100%);
}

/* invoice list */
.grid {
  display: flex;
}
.list::after {
  content: "";
  position: absolute;
  right: -2px;
  bottom: -1px;
  width: 283px;
  height: 103px;
  border: 2px solid #f00010;
  pointer-events: none;
}
table {
  flex: 1;
  width: 0;
  margin-bottom: 3px;
  border-collapse: separate;
  border-spacing: 0;
  table-layout: fixed;
}
.c-no { width: 33px; }
.c-x { width: 19px; }
.c-id { width: 71px; }
.c-date { width: 55px; }
.c-firm { width: 115px; }
.c-name { width: 87px; }
.c-sum { width: 90px; }
.c-ship { width: 63px; }
.c-exp { width: 87px; }
.c-sale { width: 112px; }
th, td {
  position: relative;
  height: 20px;
  padding: 0 4px 0 5px;
  overflow: hidden;
  white-space: nowrap;
  line-height: 19px;
}
th {
  padding: 0;
  border-right: 1px solid #9a9a9a;
  border-bottom: 1px solid #9a9a9a;
  box-shadow: inset 1px 1px #fff;
  font-weight: normal;
}
td {
  border-right: 1px solid #d1e1fa;
  border-bottom: 1px solid #d1e1fa;
}
tbody tr:nth-child(even) td {
  background: #e0ebff;
}
tbody tr td.tick {
  padding: 0 2px;
  background: none;
}
.tick input {
  display: block;
  width: 12px;
  height: 12px;
  border: solid;
  border-width: 2px 1px 1px 2px;
  border-color: #333 #b8c4d8 #b8c4d8 #333;
  background: #dce9fc;
  appearance: none;
}
.sorted, .current th {
  background: #fbc65e;
  font-weight: bold;
}
tbody tr td.picked {
  background: #1c1000;
  color: #fff;
}
.cut::after {
  content: "";
  position: absolute;
  right: 0;
  bottom: 2px;
  width: 5px;
  height: 1px;
  background: repeating-linear-gradient(90deg, #10107c 0 1px, transparent 1px 2px);
}
td.near {
  padding-left: 3px;
}
.asc svg {
  position: absolute;
  top: 5px;
  right: 3px;
}
.scroll {
  display: flex;
  flex-direction: column;
  width: 18px;
  padding: 0 1px;
}
.scroll button {
  height: 16px;
  line-height: 8px;
}
.scroll .bar {
  flex: 1;
  width: 16px;
}

/* agenda shortcuts */
aside {
  display: flex;
  flex-direction: column;
  width: 114px;
  border: 1px solid #83abe6;
  background: linear-gradient(90deg, #e6efff, #84a9e4);
}
aside h2 {
  border-right: 1px solid #44649c;
  border-bottom: 1px solid #44649c;
  background: linear-gradient(#e6efff, #9dbbec);
  font-size: 11px;
  line-height: 17px;
  text-align: center;
}
aside a {
  padding-top: 4px;
  text-align: center;
}
aside a svg {
  display: block;
  margin: 0 auto 2px;
}

/* status bar */
footer {
  display: flex;
  align-items: center;
  height: 19px;
  padding: 0 0 1px 2px;
  background: #f0f0f0;
}
footer span {
  flex: none;
  height: 17px;
  border-left: 1px solid #d4d4d4;
  text-align: center;
}
footer .hint {
  flex: 1;
  border: none;
  text-align: left;
}
footer .company {
  width: 243px;
  border: none;
}
.s-year { width: 39px; padding-right: 6px; }
.s-at { width: 54px; padding-left: 30px; }
.s-gap { width: 42px; }
.s-small { width: 24px; }
.s-long { width: 100px; }
.s-ok { width: 32px; }
.size {
  margin: 5px 0 0 10px;
}
```
